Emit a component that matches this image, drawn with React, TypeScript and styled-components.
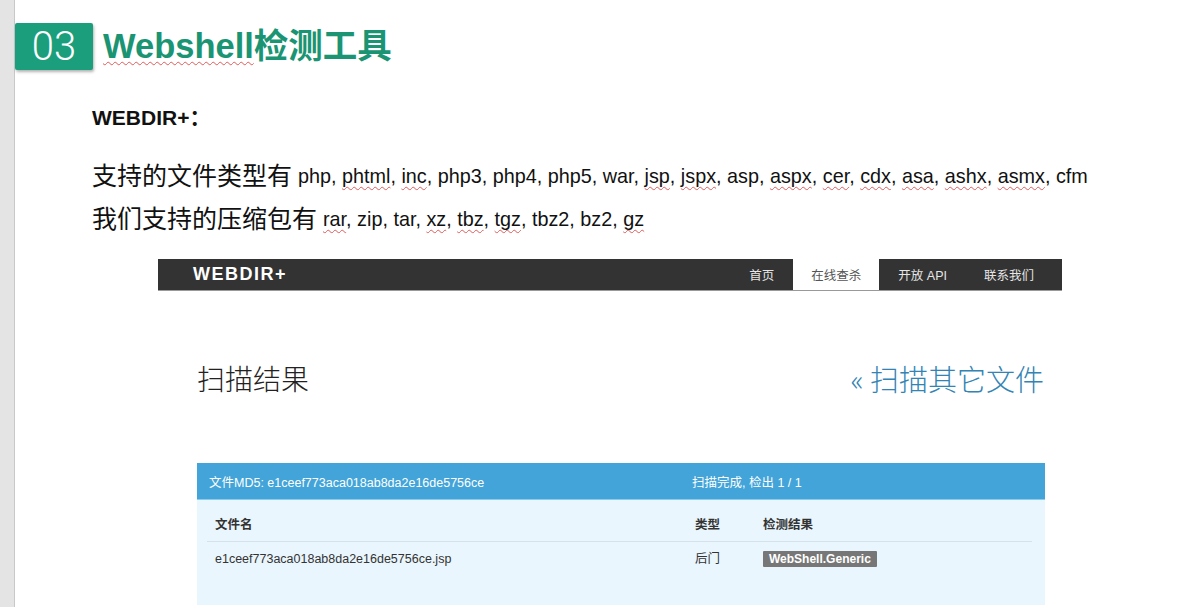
import React from 'react';
import styled, { createGlobalStyle } from 'styled-components';

const GlobalStyle = createGlobalStyle`
  html, body {
    margin: 0;
    padding: 0;
    background: #fff;
  }
  body {
    font-family: 'Liberation Sans', 'Noto Sans CJK SC', sans-serif;
    overflow: hidden;
  }
`;

const cjk = `'Liberation Sans', 'Noto Sans CJK SC', sans-serif`;

const Page = styled.div`
  display: flex;
  height: 100vh;
  width: 100%;
  overflow: hidden;
`;

const Gutter = styled.div`
  width: 14px;
  flex-shrink: 0;
  background: #e4e4e4;
  border-right: 1px solid #c8c8c8;
`;

const Slide = styled.div`
  flex: 1;
  padding-top: 23px;
`;

const TitleRow = styled.div`
  display: flex;
  align-items: center;
  height: 47px;
`;

const Number = styled.div`
  width: 78px;
  height: 47px;
  background: #1b9e7b;
  color: #fff;
  font-family: Roboto, 'Open Sans', sans-serif;
  font-weight: 300;
  font-size: 40px;
  display: flex;
  align-items: center;
  justify-content: center;
  border-radius: 2px;
  box-shadow: 1px 2px 3px rgba(0, 0, 0, 0.3);
`;

const Title = styled.h1`
  margin: 0 0 0 10px;
  font-family: ${cjk};
  font-size: 34.5px;
  font-weight: 700;
  color: #1a9472;
  line-height: 47px;
`;

const Squiggle = styled.span`
  text-decoration: underline wavy #e05a5a;
  text-decoration-thickness: 1px;
  text-underline-offset: 3px;
  text-decoration-skip-ink: none;
`;

const Intro = styled.div`
  margin-left: 77px;
  margin-top: 36px;
`;

const Lead = styled.div`
  font-family: ${cjk};
  font-weight: 700;
  font-size: 21px;
  line-height: 24px;
  color: #111;
`;

const Line = styled.div<{ $gap: number }>`
  margin-top: ${({ $gap }) => $gap}px;
  height: 30px;
  line-height: 30px;
  color: #111;
  white-space: nowrap;
  display: flex;
  align-items: center;
`;

const Cn = styled.span`
  font-family: 'Noto Sans CJK SC', sans-serif;
  font-size: 25px;
  line-height: 30px;
  margin-right: 6px;
`;

const Ext = styled.span`
  font-family: 'Liberation Sans', sans-serif;
  font-size: 19.8px;
  line-height: 30px;
  padding-top: 3px;
`;

const NavBar = styled.div`
  margin: 27px 0 0 143px;
  width: 904px;
  height: 32px;
  background: #333;
  border-bottom: 1px solid #999;
  box-sizing: border-box;
  display: flex;
  align-items: stretch;
  justify-content: space-between;
  padding-right: 10px;
`;

const Brand = styled.div`
  padding-left: 35px;
  color: #fff;
  font-weight: 700;
  font-size: 18px;
  letter-spacing: 1.5px;
  display: flex;
  align-items: center;
`;

const NavItems = styled.div`
  display: flex;
  gap: 1px;
`;

const NavItem = styled.div<{ $active?: boolean }>`
  padding: 0 18px;
  display: flex;
  align-items: center;
  font-family: ${cjk};
  font-size: 12.5px;
  color: ${({ $active }) => ($active ? '#555' : '#e6e6e6')};
  background: ${({ $active }) => ($active ? '#fff' : 'transparent')};
`;

const Content = styled.div`
  margin-left: 182px;
  width: 848px;
`;

const ResultHead = styled.div`
  margin-top: 67px;
  display: flex;
  justify-content: space-between;
  align-items: center;
  height: 40px;
  font-family: 'Noto Sans CJK SC', sans-serif;
  font-weight: 300;
`;

const HeadTitle = styled.div`
  color: #222;
  font-size: 28px;
`;

const Rescan = styled.div`
  color: #3384b4;
  font-size: 29px;
  margin-right: 1px;
`;

const Panel = styled.div`
  margin-top: 65px;
  background: #eaf6fd;
`;

const PanelHead = styled.div`
  height: 37px;
  background: #42a4d8;
  border-bottom: 1px solid #8ccbeb;
  box-sizing: border-box;
  display: flex;
  align-items: center;
  color: #fff;
  font-family: ${cjk};
  font-size: 12.5px;
  padding-left: 12px;
`;

const HeadCell = styled.div<{ $w?: number }>`
  width: ${({ $w }) => ($w ? `${$w}px` : 'auto')};
`;

const PanelBody = styled.div`
  padding: 9px 13px 29px 10px;
`;

const Table = styled.table`
  width: 100%;
  border-collapse: collapse;
  font-family: ${cjk};
  font-size: 12.5px;
  color: #333;
`;

const Th = styled.th<{ $w?: number }>`
  text-align: left;
  font-weight: 700;
  padding: 6px 8px;
  line-height: 20px;
  width: ${({ $w }) => ($w ? `${$w}px` : 'auto')};
  border-bottom: 1px solid #d5e2ea;
  box-sizing: border-box;
`;

const Td = styled.td`
  padding: 7px 8px;
  line-height: 20px;
`;

const Label = styled.span`
  display: inline-block;
  background: #777;
  color: #fff;
  font-weight: 700;
  font-size: 12px;
  line-height: 16px;
  padding: 0 6px;
  border-radius: 1px;
`;

const types = ['php', 'phtml', 'inc', 'php3', 'php4', 'php5', 'war', 'jsp', 'jspx', 'asp', 'aspx', 'cer', 'cdx', 'asa', 'ashx', 'asmx', 'cfm'];
const typeFlags = new Set(['phtml', 'inc', 'jsp', 'jspx', 'aspx', 'cer', 'cdx', 'asa', 'ashx', 'asmx']);
const archives = ['rar', 'zip', 'tar', 'xz', 'tbz', 'tgz', 'tbz2', 'bz2', 'gz'];
const archiveFlags = new Set(['rar', 'xz', 'tbz', 'tgz', 'gz']);

const ExtList = ({ items, flagged }: { items: string[]; flagged: Set<string> }) => (
  <Ext>
    {items.map((item, i) => (
      <React.Fragment key={item}>
        {flagged.has(item) ? <Squiggle>{item}</Squiggle> : item}
        {i < items.length - 1 ? ', ' : ''}
      </React.Fragment>
    ))}
  </Ext>
);

const md5 = 'e1ceef773aca018ab8da2e16de5756ce';

export default function App() {
  return (
    <>
      <GlobalStyle />
      <Page>
        <Gutter />
        <Slide>
          <TitleRow>
            <Number>03</Number>
            <Title>
              <Squiggle>Webshell</Squiggle>检测工具
            </Title>
          </TitleRow>

          <Intro>
            <Lead>WEBDIR+：</Lead>
            <Line $gap={29}>
              <Cn>支持的文件类型有</Cn>
              <ExtList items={types} flagged={typeFlags} />
            </Line>
            <Line $gap={13}>
              <Cn>我们支持的压缩包有</Cn>
              <ExtList items={archives} flagged={archiveFlags} />
            </Line>
          </Intro>

          <NavBar>
            <Brand>WEBDIR+</Brand>
            <NavItems>
              <NavItem>首页</NavItem>
              <NavItem $active>在线查杀</NavItem>
              <NavItem>开放 API</NavItem>
              <NavItem>联系我们</NavItem>
            </NavItems>
          </NavBar>

          <Content>
            <ResultHead>
              <HeadTitle>扫描结果</HeadTitle>
              <Rescan>« 扫描其它文件</Rescan>
            </ResultHead>

            <Panel>
              <PanelHead>
                <HeadCell $w={483}>文件MD5: {md5}</HeadCell>
                <HeadCell>扫描完成, 检出 1 / 1</HeadCell>
              </PanelHead>
              <PanelBody>
                <Table>
                  <thead>
                    <tr>
                      <Th $w={480}>文件名</Th>
                      <Th $w={68}>类型</Th>
                      <Th>检测结果</Th>
                    </tr>
                  </thead>
                  <tbody>
                    <tr>
                      <Td>{md5}.jsp</Td>
                      <Td>后门</Td>
                      <Td>
                        <Label>WebShell.Generic</Label>
                      </Td>
                    </tr>
                  </tbody>
                </Table>
              </PanelBody>
            </Panel>
          </Content>
        </Slide>
      </Page>
    </>
  );
}
